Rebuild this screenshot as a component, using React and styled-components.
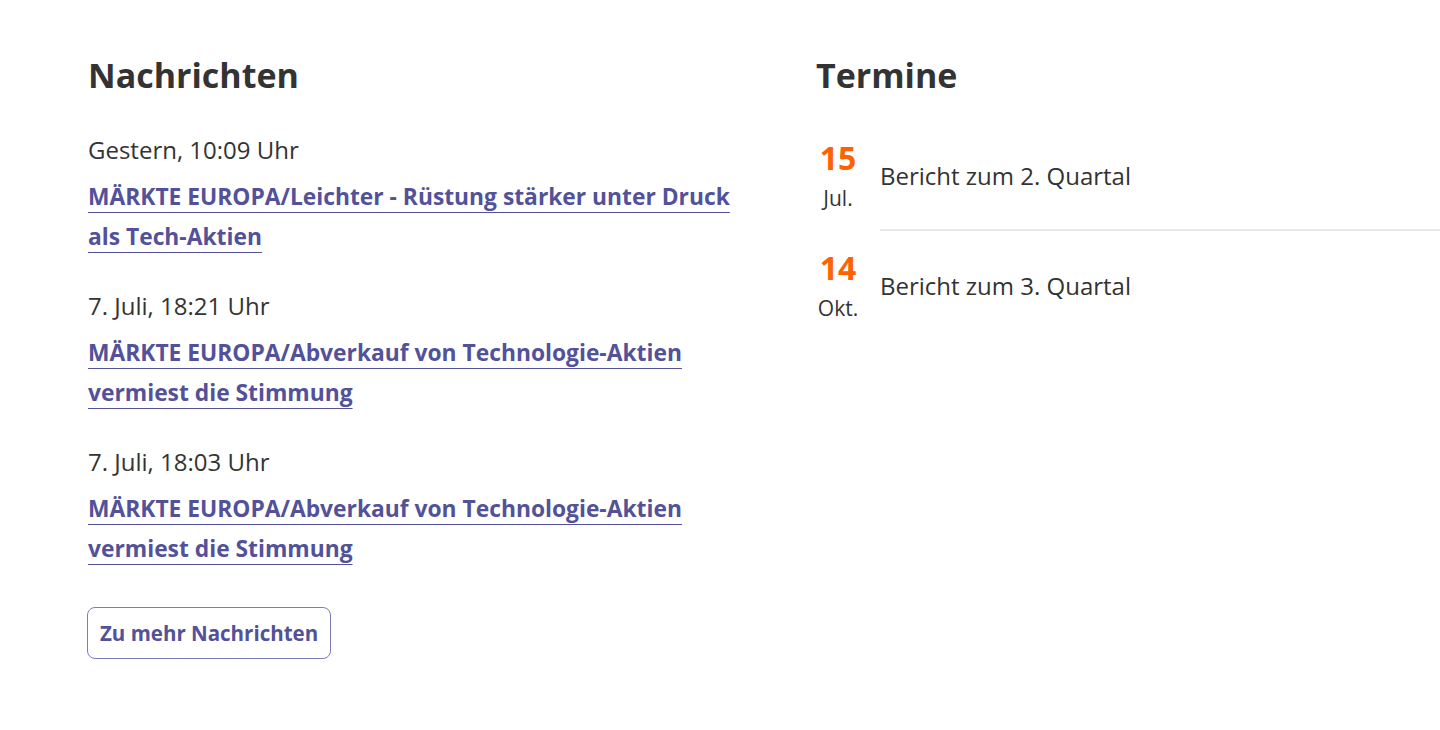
import React from 'react'
import styled, { createGlobalStyle } from 'styled-components'

const GlobalStyle = createGlobalStyle`
  body {
    margin: 0;
    background: #fff;
    font-family: 'Open Sans', 'Liberation Sans', sans-serif;
    color: #333;
    overflow: hidden;
  }
`

const news = [
  { time: 'Gestern, 10:09 Uhr', title: 'MÄRKTE EUROPA/Leichter - Rüstung stärker unter Druck als Tech-Aktien' },
  { time: '7. Juli, 18:21 Uhr', title: 'MÄRKTE EUROPA/Abverkauf von Technologie-Aktien vermiest die Stimmung' },
  { time: '7. Juli, 18:03 Uhr', title: 'MÄRKTE EUROPA/Abverkauf von Technologie-Aktien vermiest die Stimmung' },
]

const events = [
  { day: '15', month: 'Jul.', label: 'Bericht zum 2. Quartal' },
  { day: '14', month: 'Okt.', label: 'Bericht zum 3. Quartal' },
]

const App = () => {
  return (
    <Page>
      <GlobalStyle />
      <NewsColumn>
        <Heading>Nachrichten</Heading>
        <NewsList>
          {news.map((item, i) => (
            <NewsItem key={i}>
              <Time>{item.time}</Time>
              <Headline href='#'>{item.title}</Headline>
            </NewsItem>
          ))}
        </NewsList>
        <MoreButton type='button'>Zu mehr Nachrichten</MoreButton>
      </NewsColumn>
      <EventsColumn>
        <Heading>Termine</Heading>
        <EventList>
          {events.map((ev, i) => (
            <EventRow key={i}>
              <DateBox>
                <Day>{ev.day}</Day>
                <Month>{ev.month}</Month>
              </DateBox>
              <EventLabel $last={i === events.length - 1}>{ev.label}</EventLabel>
            </EventRow>
          ))}
        </EventList>
      </EventsColumn>
    </Page>
  )
}

const Page = styled.main`
  display: grid;
  grid-template-columns: 728px 1fr;
  padding: 52px 0 0 88px;
  min-height: 730px;
  box-sizing: border-box;
`

const NewsColumn = styled.section`
  display: flex;
  flex-direction: column;
  align-items: flex-start;
`

const EventsColumn = styled.section`
  display: flex;
  flex-direction: column;
`

const Heading = styled.h2`
  margin: 0;
  font-size: 34px;
  line-height: 46px;
  font-weight: 700;
  color: #333;
`

const NewsList = styled.div`
  display: flex;
  flex-direction: column;
  gap: 29px;
  margin-top: 32px;
  max-width: 660px;
`

const NewsItem = styled.article`
  display: flex;
  flex-direction: column;
  gap: 7px;
`

const Time = styled.span`
  font-size: 24px;
  line-height: 40px;
  color: #333;
`

const Headline = styled.a`
  font-size: 22.8px;
  line-height: 40px;
  font-weight: 700;
  color: #525199;
  text-decoration: underline;
  text-decoration-thickness: 1px;
  text-underline-offset: 7px;
`

const MoreButton = styled.button`
  margin-top: 38px;
  margin-left: -1px;
  height: 52px;
  padding: 0 12px;
  border: 1px solid #7d7cb8;
  border-radius: 8px;
  background: #fff;
  color: #525199;
  font-family: inherit;
  font-size: 20.5px;
  font-weight: 700;
  cursor: pointer;
`

const EventList = styled.div`
  display: flex;
  flex-direction: column;
  gap: 18px;
  margin-top: 41px;
`

const EventRow = styled.div`
  display: flex;
  align-items: stretch;
  gap: 20px;
`

const DateBox = styled.div`
  display: flex;
  flex-direction: column;
  align-items: center;
  width: 44px;
  padding-bottom: 12px;
`

const Day = styled.span`
  font-size: 32px;
  line-height: 38px;
  font-weight: 700;
  color: #ff6200;
`

const Month = styled.span`
  font-size: 21px;
  line-height: 42px;
  color: #333;
`

const EventLabel = styled.div`
  flex: 1;
  display: flex;
  align-items: center;
  padding-bottom: 18px;
  font-size: 24px;
  color: #333;
  border-bottom: 2px solid ${(p) => (p.$last ? 'transparent' : '#e8e8e8')};
`

export default App
